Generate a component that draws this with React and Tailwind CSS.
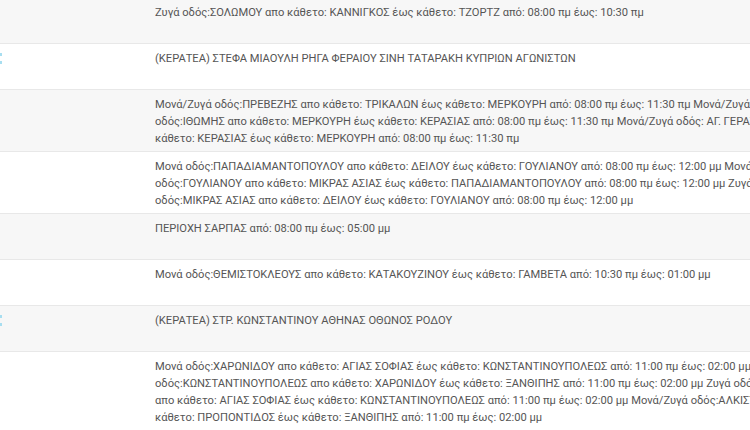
const rows = [
  {
    bg: 'bg-[#f7f7f7]',
    lines: ['Ζυγά οδός:ΣΟΛΩΜΟΥ απο κάθετο: ΚΑΝΝΙΓΚΟΣ έως κάθετο: ΤΖΟΡΤΖ από: 08:00 πμ έως: 10:30 πμ'],
  },
  {
    bg: 'bg-white',
    mark: true,
    lines: ['(ΚΕΡΑΤΕΑ) ΣΤΕΦΑ ΜΙΑΟΥΛΗ ΡΗΓΑ ΦΕΡΑΙΟΥ ΣΙΝΗ ΤΑΤΑΡΑΚΗ ΚΥΠΡΙΩΝ ΑΓΩΝΙΣΤΩΝ'],
  },
  {
    bg: 'bg-[#f7f7f7]',
    lines: [
      'Μονά/Ζυγά οδός:ΠΡΕΒΕΖΗΣ απο κάθετο: ΤΡΙΚΑΛΩΝ έως κάθετο: ΜΕΡΚΟΥΡΗ από: 08:00 πμ έως: 11:30 πμ Μονά/Ζυγά',
      'οδός:ΙΘΩΜΗΣ απο κάθετο: ΜΕΡΚΟΥΡΗ έως κάθετο: ΚΕΡΑΣΙΑΣ από: 08:00 πμ έως: 11:30 πμ Μονά/Ζυγά οδός: ΑΓ. ΓΕΡΑΣΙΜΟΥ απο',
      'κάθετο: ΚΕΡΑΣΙΑΣ έως κάθετο: ΜΕΡΚΟΥΡΗ από: 08:00 πμ έως: 11:30 πμ',
    ],
  },
  {
    bg: 'bg-white',
    lines: [
      'Μονά οδός:ΠΑΠΑΔΙΑΜΑΝΤΟΠΟΥΛΟΥ απο κάθετο: ΔΕΙΛΟΥ έως κάθετο: ΓΟΥΛΙΑΝΟΥ από: 08:00 πμ έως: 12:00 μμ Μονά',
      'οδός:ΓΟΥΛΙΑΝΟΥ απο κάθετο: ΜΙΚΡΑΣ ΑΣΙΑΣ έως κάθετο: ΠΑΠΑΔΙΑΜΑΝΤΟΠΟΥΛΟΥ από: 08:00 πμ έως: 12:00 μμ Ζυγά',
      'οδός:ΜΙΚΡΑΣ ΑΣΙΑΣ απο κάθετο: ΔΕΙΛΟΥ έως κάθετο: ΓΟΥΛΙΑΝΟΥ από: 08:00 πμ έως: 12:00 μμ',
    ],
  },
  {
    bg: 'bg-[#f7f7f7]',
    lines: ['ΠΕΡΙΟΧΗ ΣΑΡΠΑΣ από: 08:00 πμ έως: 05:00 μμ'],
  },
  {
    bg: 'bg-white',
    lines: ['Μονά οδός:ΘΕΜΙΣΤΟΚΛΕΟΥΣ απο κάθετο: ΚΑΤΑΚΟΥΖΙΝΟΥ έως κάθετο: ΓΑΜΒΕΤΑ από: 10:30 πμ έως: 01:00 μμ'],
  },
  {
    bg: 'bg-[#f7f7f7]',
    mark: true,
    lines: ['(ΚΕΡΑΤΕΑ) ΣΤΡ. ΚΩΝΣΤΑΝΤΙΝΟΥ ΑΘΗΝΑΣ ΟΘΩΝΟΣ ΡΟΔΟΥ'],
  },
  {
    bg: 'bg-white',
    lines: [
      'Μονά οδός:ΧΑΡΩΝΙΔΟΥ απο κάθετο: ΑΓΙΑΣ ΣΟΦΙΑΣ έως κάθετο: ΚΩΝΣΤΑΝΤΙΝΟΥΠΟΛΕΩΣ από: 11:00 πμ έως: 02:00 μμ Ζυγά',
      'οδός:ΚΩΝΣΤΑΝΤΙΝΟΥΠΟΛΕΩΣ απο κάθετο: ΧΑΡΩΝΙΔΟΥ έως κάθετο: ΞΑΝΘΙΠΗΣ από: 11:00 πμ έως: 02:00 μμ Ζυγά οδός:ΞΑΝΘΙΠΗΣ',
      'απο κάθετο: ΑΓΙΑΣ ΣΟΦΙΑΣ έως κάθετο: ΚΩΝΣΤΑΝΤΙΝΟΥΠΟΛΕΩΣ από: 11:00 πμ έως: 02:00 μμ Μονά/Ζυγά οδός:ΑΛΚΙΣΤΙΔΟΣ απο',
      'κάθετο: ΠΡΟΠΟΝΤΙΔΟΣ έως κάθετο: ΞΑΝΘΙΠΗΣ από: 11:00 πμ έως: 02:00 μμ',
    ],
  },
];

export default function App() {
  return (
    <div className="w-[750px] h-[430px] overflow-hidden bg-white font-['Roboto','Noto_Sans',sans-serif] text-[11.15px] leading-[17px] text-[#555]">
      <div className="-mt-[2px]">
        {rows.map((row, i) => (
          <div key={i} className={`flex min-h-[46px] border-b border-[#e8e8e8] ${row.bg}`}>
            {/* first column, mostly scrolled out of view */}
            <div className="w-[155px] shrink-0 pt-[9px]">
              {row.mark && (
                <div className="flex flex-col gap-[5px]">
                  <span className="block w-[2px] h-[3px] bg-[#a8def0]" />
                  <span className="block w-[2px] h-[3px] bg-[#a8def0]" />
                </div>
              )}
            </div>
            <div className="flex-1 min-w-0 overflow-hidden pt-[6px] pb-[4px]">
              {row.lines.map((line, j) => (
                <div key={j} className="whitespace-nowrap">
                  {line}
                </div>
              ))}
            </div>
          </div>
        ))}
      </div>
    </div>
  );
}
